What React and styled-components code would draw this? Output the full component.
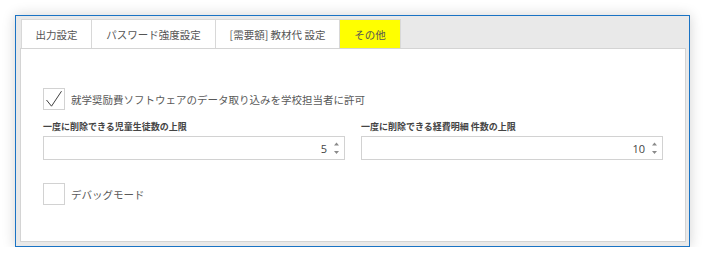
import styled, { createGlobalStyle } from 'styled-components';

const GlobalStyle = createGlobalStyle`
  body {
    margin: 0;
    background: #ffffff;
    font-family: "Noto Sans CJK JP", "Noto Sans", sans-serif;
  }
`;

const tabs = [
  { label: '出力設定', width: 71 },
  { label: 'パスワード強度設定', width: 125 },
  { label: '[需要額] 教材代 設定', width: 125 },
  { label: 'その他', width: 61, active: true },
];

function CheckIcon() {
  return (
    <svg width="18" height="18" viewBox="0 0 18 18">
      <path d="M1.5 10 L6.5 16.2 L16.5 1.2" fill="none" stroke="#404040" strokeWidth="1" />
    </svg>
  );
}

function Spinner() {
  return (
    <svg width="7" height="16" viewBox="0 0 7 16">
      <path d="M1 5.5 L3.5 2.5 L6 5.5 Z" fill="#8a8a8a" />
      <path d="M1 11 L3.5 14 L6 11 Z" fill="#8a8a8a" />
    </svg>
  );
}

function App() {
  return (
    <>
      <GlobalStyle />
      <Window>
        <TabStrip>
          {tabs.map((t) => (
            <Tab key={t.label} $width={t.width} $active={t.active}>
              {t.label}
            </Tab>
          ))}
        </TabStrip>
        <Panel>
          <CheckRow>
            <CheckBox>
              <CheckIcon />
            </CheckBox>
            <CheckLabel>就学奨励費ソフトウェアのデータ取り込みを学校担当者に許可</CheckLabel>
          </CheckRow>
          <Fields>
            <Field>
              <FieldLabel>一度に削除できる児童生徒数の上限</FieldLabel>
              <NumberBox>
                <Value>5</Value>
                <Spinner />
              </NumberBox>
            </Field>
            <Field>
              <FieldLabel>一度に削除できる経費明細 件数の上限</FieldLabel>
              <NumberBox>
                <Value>10</Value>
                <Spinner />
              </NumberBox>
            </Field>
          </Fields>
          <CheckRow $top={23}>
            <CheckBox />
            <CheckLabel>デバッグモード</CheckLabel>
          </CheckRow>
        </Panel>
      </Window>
    </>
  );
}

export default App;

const Window = styled.div`
  margin: 15px 0 0 15px;
  width: 675px;
  height: 232px;
  border: 1px solid #1a73c4;
  box-shadow: 0 0 12px rgba(0, 0, 0, 0.18);
  background: #e9e9e9;
  padding: 3px 3px 4px 4px;
  box-sizing: border-box;
  display: flex;
  flex-direction: column;
`;

const TabStrip = styled.div`
  display: flex;
  height: 29px;
  padding-left: 1px;
`;

const Tab = styled.div`
  width: ${(p) => p.$width}px;
  box-sizing: border-box;
  display: flex;
  align-items: center;
  justify-content: center;
  font-size: 10.5px;
  color: #555555;
  background: ${(p) => (p.$active ? '#ffff00' : '#ffffff')};
  border: 1px solid #d8d8d8;
  border-bottom: none;
  border-left: ${(p) => (p.$active ? 'none' : '1px solid #d8d8d8')};
  margin-left: ${(p) => (p.$active ? '0' : '-1px')};
  white-space: nowrap;
  &:first-child {
    margin-left: 0;
  }
`;

const Panel = styled.div`
  flex: 1;
  background: #ffffff;
  border: 1px solid #d4d4d4;
  padding: 39px 22px 0 22px;
  display: flex;
  flex-direction: column;
`;

const CheckRow = styled.div`
  display: flex;
  align-items: center;
  gap: 6px;
  margin-top: ${(p) => p.$top || 0}px;
`;

const CheckBox = styled.div`
  width: 22px;
  height: 22px;
  box-sizing: border-box;
  border: 1px solid #d2d2d2;
  background: #ffffff;
  display: flex;
  align-items: center;
  justify-content: center;
`;

const CheckLabel = styled.span`
  font-size: 10.5px;
  color: #595959;
`;

const Fields = styled.div`
  display: grid;
  grid-template-columns: 1fr 1fr;
  gap: 16px;
  margin-top: 11px;
`;

const Field = styled.div`
  display: flex;
  flex-direction: column;
  gap: 3px;
`;

const FieldLabel = styled.span`
  font-size: 9px;
  font-weight: 700;
  color: #444444;
  line-height: 12px;
`;

const NumberBox = styled.div`
  height: 24px;
  box-sizing: border-box;
  border: 1px solid #d2d2d2;
  display: flex;
  align-items: center;
  justify-content: flex-end;
  gap: 6px;
  padding-right: 4px;
`;

const Value = styled.span`
  font-family: "Open Sans", "Noto Sans", sans-serif;
  font-size: 11px;
  color: #444444;
`;
